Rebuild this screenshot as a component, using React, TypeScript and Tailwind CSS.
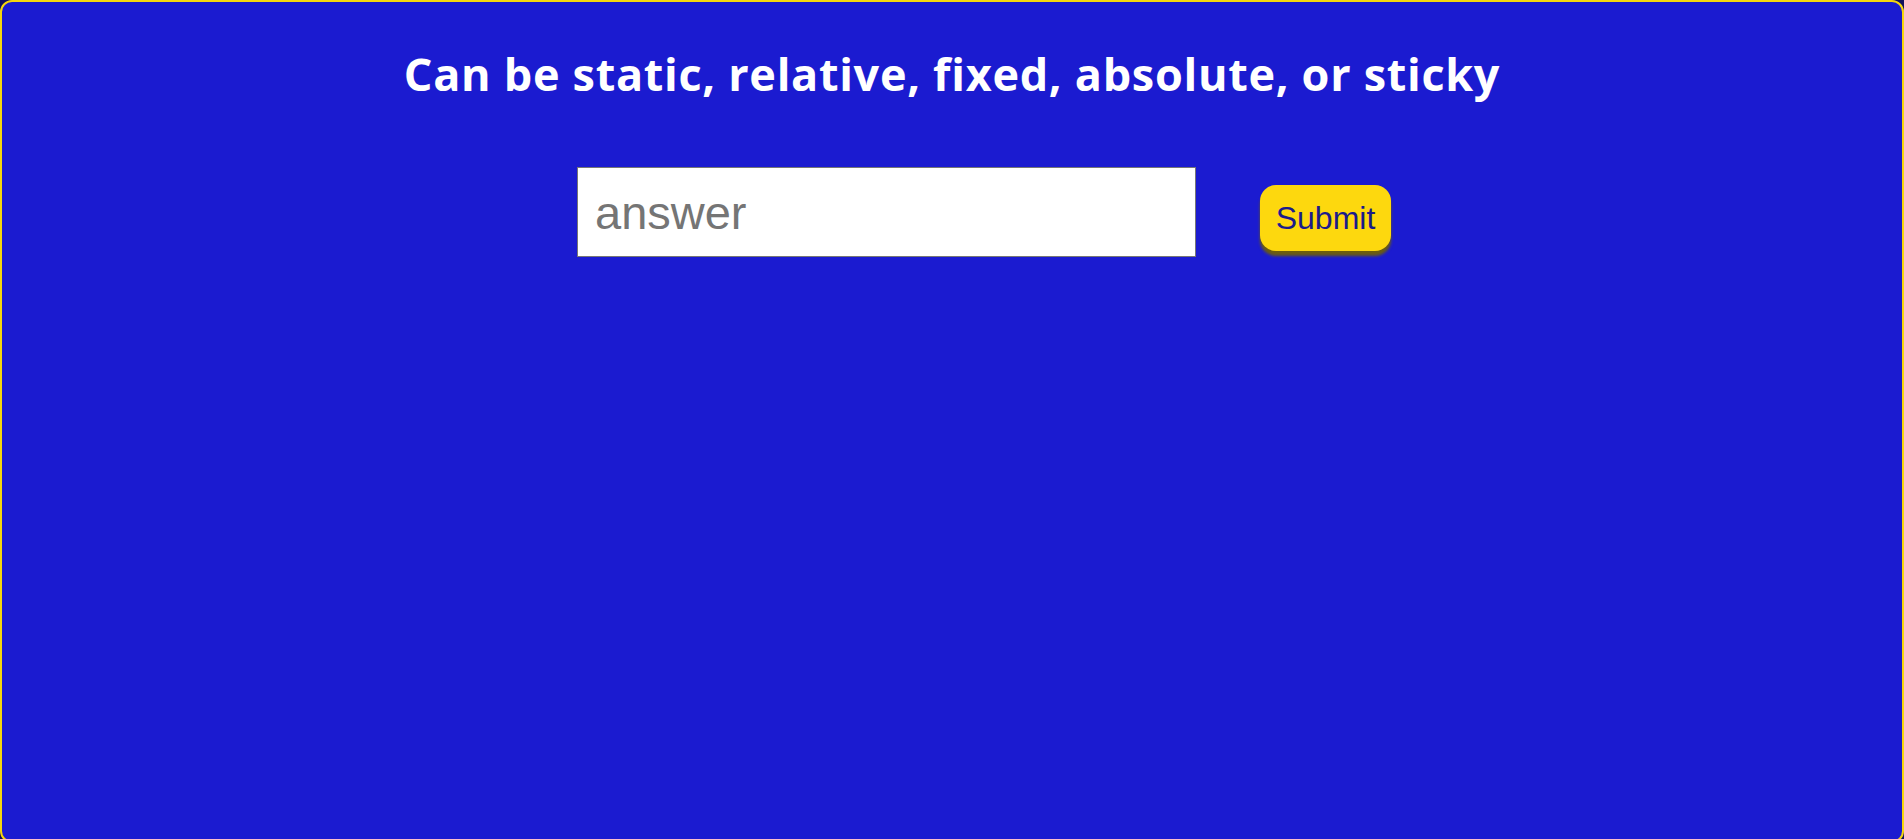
export default function App() {
  return (
    <div className="min-h-screen w-full bg-[#10105c]">
      <div className="flex min-h-[843px] w-full flex-col items-center rounded-[12px] border-2 border-[#f5d60c] bg-[#1b1bd0]">
        {/* Question */}
        <h1 className="mt-[43px] text-center font-['Open_Sans',sans-serif] text-[45px] font-bold leading-[58px] tracking-[0.7px] text-white [font-variant-ligatures:none]">
          Can be static, relative, fixed, absolute, or sticky
        </h1>
        {/* Answer form */}
        <form
          className="mt-[64px] flex items-start gap-[64px] pl-[64px]"
          onSubmit={(e) => e.preventDefault()}
        >
          <input
            type="text"
            placeholder="answer"
            className="h-[90px] w-[619px] border border-[#767676] bg-white px-[17px] font-['Liberation_Sans',Arial,sans-serif] text-[47px] text-black placeholder:text-[#757575] focus:outline-none"
          />
          <button
            type="submit"
            className="mt-[18px] h-[66px] w-[131px] cursor-pointer rounded-[16px] bg-[#fdd80e] font-['Liberation_Sans',Arial,sans-serif] text-[32px] text-[#1b1b8a] shadow-[0_5px_3px_#6b5d10]"
          >
            Submit
          </button>
        </form>
      </div>
    </div>
  );
}
